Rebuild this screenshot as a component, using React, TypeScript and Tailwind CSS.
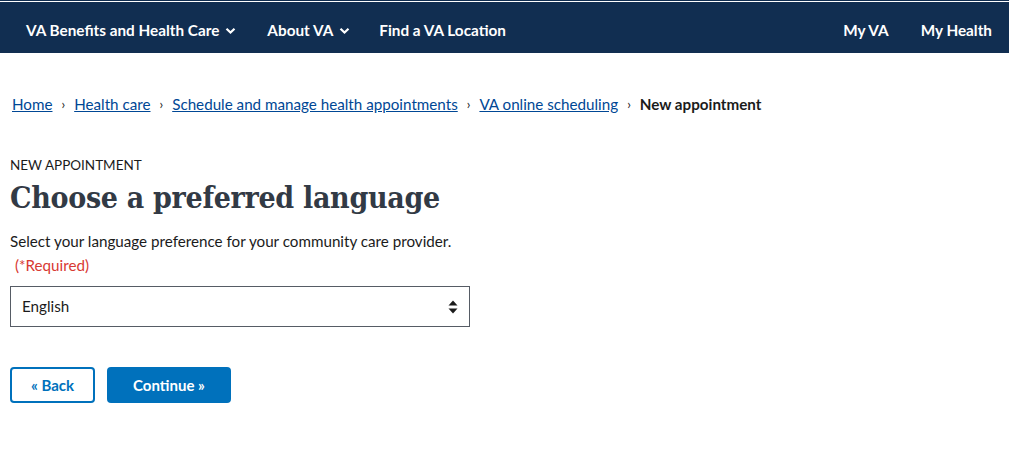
import React from "react";

function Chevron() {
  return (
    <svg width="11" height="8" viewBox="0 0 11 8" className="ml-[6px] mt-[1px]">
      <path d="M1.5 1.8 L5.5 5.6 L9.5 1.8" fill="none" stroke="white" strokeWidth="2.2" />
    </svg>
  );
}

function Sep() {
  return <span className="mx-[9px] text-[#1b1b1b] text-[13px]">›</span>;
}

export default function App() {
  const sans = { fontFamily: "Lato, 'Noto Sans', sans-serif" };
  return (
    <div className="w-[1009px] h-[469px] bg-white" style={sans}>
      <header className="bg-[#112e51] h-[53px] border-t-[1px] border-[#112e51] relative">
        <div className="h-[1px] bg-white" />
        <nav className="flex items-center h-[51px] pt-[5px] px-[26px] text-white font-bold text-[15.3px]">
          <span className="flex items-center">VA Benefits and Health Care<Chevron /></span>
          <span className="flex items-center ml-[31px]">About VA<Chevron /></span>
          <span className="ml-[29px]">Find a VA Location</span>
          <span className="ml-auto">My VA</span>
          <span className="ml-[32px] mr-[-9px]">My Health</span>
        </nav>
      </header>
      <main className="px-[10px]">
        <div className="flex items-center pt-[40px] pl-[2px] text-[15.2px] leading-[22px]">
          <a className="text-[#004795] underline">Home</a>
          <Sep />
          <a className="text-[#004795] underline">Health care</a>
          <Sep />
          <a className="text-[#004795] underline">Schedule and manage health appointments</a>
          <Sep />
          <a className="text-[#004795] underline">VA online scheduling</a>
          <Sep />
          <span className="font-bold text-[#1b1b1b]">New appointment</span>
        </div>
        <div className="mt-[41px] text-[13.5px] leading-[18px] text-[#1b1b1b]">NEW APPOINTMENT</div>
        <h1
          className="text-[30px] leading-[36px] font-bold text-[#323a45] mt-[6px] tracking-[-0.3px]"
          style={{ fontFamily: "'DejaVu Serif Condensed', 'DejaVu Serif', serif", fontStretch: "condensed" }}
        >
          Choose a preferred language
        </h1>
        <p className="mt-[14px] text-[15.2px] leading-[22px] text-[#1b1b1b]">
          Select your language preference for your community care provider.
        </p>
        <p className="mt-[2px] text-[15.2px] leading-[22px] text-[#d83933] ml-[5px]">(*Required)</p>
        <div className="mt-[10px] w-[460px] h-[41px] border border-[#565c65] flex items-center justify-between px-[11px] text-[15.2px] text-[#1b1b1b]">
          <span>English</span>
          <svg width="10" height="14" viewBox="0 0 10 14">
            <path d="M5 0.5 L9.5 5.5 L0.5 5.5 Z" fill="#1b1b1b" />
            <path d="M5 13.5 L9.5 8.5 L0.5 8.5 Z" fill="#1b1b1b" />
          </svg>
        </div>
        <div className="flex mt-[40px] gap-[12px]">
          <button className="w-[85px] h-[36px] rounded-[4px] border-2 border-[#0071bc] text-[#0071bc] font-bold text-[15px]">
            « Back
          </button>
          <button className="w-[124px] h-[36px] rounded-[4px] bg-[#0071bc] text-white font-bold text-[15px]">
            Continue »
          </button>
        </div>
      </main>
    </div>
  );
}
